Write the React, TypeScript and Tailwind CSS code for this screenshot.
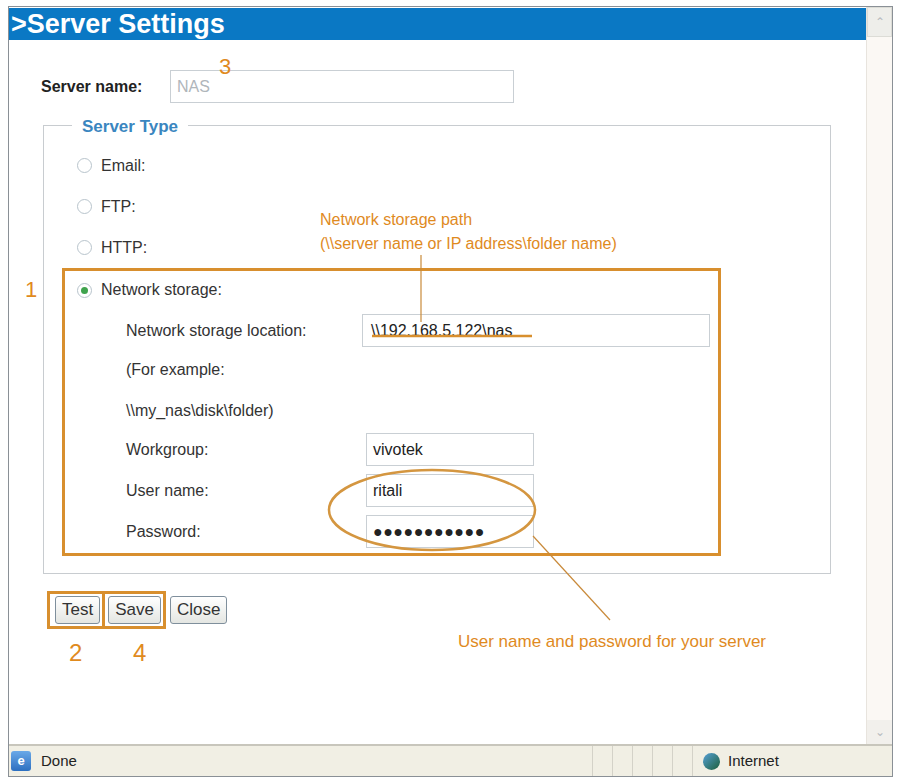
import React from "react";

const F = { fontFamily: '"Liberation Sans", Arial, sans-serif' };

function Radio({ checked }: { checked?: boolean }) {
  return (
    <span className="w-[15px] h-[15px] rounded-full border border-[#b8c4cc] bg-white flex items-center justify-center shrink-0">
      {checked && <span className="w-[7px] h-[7px] rounded-full bg-[#3fa34d]" />}
    </span>
  );
}

function Input({ w, children, className = "" }: { w: string; children?: React.ReactNode; className?: string }) {
  return (
    <div className={`${w} h-[33px] border border-[#c9cfd4] bg-white flex items-center px-[6px] text-[16px] text-[#222] ${className}`}>
      {children}
    </div>
  );
}

function Btn({ children }: { children: React.ReactNode }) {
  return (
    <div className="h-[28px] px-[6px] border border-[#7f8f9c] rounded-[3px] bg-gradient-to-b from-white to-[#e4e6e2] flex items-center text-[17px] text-[#333]">
      {children}
    </div>
  );
}

export default function App() {
  const orange = "text-[#e08a1e]";
  return (
    <div style={F} className="w-[901px] h-[781px] bg-white relative overflow-hidden">
      <div className="absolute left-[8px] top-[6px] right-[8px] bottom-[4px] border border-[#8a9096] flex flex-col">
        <div className="flex flex-1 min-h-0">
          <div className="flex-1 flex flex-col">
            <div className="h-[32px] mt-[1px] bg-[#0a78c4] text-white font-bold text-[27px] leading-[32px] pl-[2px]">&gt;Server Settings</div>
            <div className="flex items-center mt-[30px] pl-[32px]">
              <span className="font-bold text-[16px] text-[#222] w-[129px]">Server name:</span>
              <Input w="w-[344px]" className="text-[#b0b6bb] text-[14px]">NAS</Input>
            </div>
            <div className="relative mt-[22px] ml-[34px] w-[788px] h-[449px] border border-[#c8ccd0]">
              <span className="absolute -top-[12px] left-[28px] bg-white px-[10px] font-bold text-[17px] text-[#3a86c0]">Server Type</span>
              <div className="flex flex-col pt-[32px] pl-[33px] gap-[26px] text-[16px] text-[#333]">
                <div className="flex items-center gap-[9px] h-[15px]"><Radio /><span>Email:</span></div>
                <div className="flex items-center gap-[9px] h-[15px]"><Radio /><span>FTP:</span></div>
                <div className="flex items-center gap-[9px] h-[15px]"><Radio /><span>HTTP:</span></div>
              </div>
              <div className="absolute left-[18px] top-[142px] w-[659px] h-[288px] border-[3px] border-[#d88f2e]">
                <div className="flex items-center gap-[9px] mt-[7px] ml-[12px] text-[16px] text-[#333]"><Radio checked /><span>Network storage:</span></div>
                <div className="flex flex-col mt-[12px] ml-[61px] text-[16px] text-[#333]">
                  <div className="flex items-center h-[33px]"><span className="w-[236px]">Network storage location:</span><Input w="w-[348px]" className="!pl-[8px]">\\192.168.5.122\nas</Input></div>
                  <div className="h-[35px] flex items-end">(For example:</div>
                  <div className="h-[41px] flex items-end">\\my_nas\disk\folder)</div>
                  <div className="flex flex-col gap-[8px] mt-[10px]">
                    <div className="flex items-center"><span className="w-[240px]">Workgroup:</span><Input w="w-[168px]">vivotek</Input></div>
                    <div className="flex items-center"><span className="w-[240px]">User name:</span><Input w="w-[168px]">ritali</Input></div>
                    <div className="flex items-center"><span className="w-[240px]">Password:</span><Input w="w-[168px]" className="text-[13px] tracking-[0.5px]">●●●●●●●●●●●</Input></div>
                  </div>
                </div>
              </div>
            </div>
            <div className="flex items-center mt-[17px] ml-[38px]">
              <div className="border-[3px] border-[#d88f2e] p-[2px] pl-[5px]"><Btn>Test</Btn></div>
              <div className="border-[3px] border-l-0 border-[#d88f2e] p-[2px] pl-[3px]"><Btn>Save</Btn></div>
              <div className="ml-[4px]"><Btn>Close</Btn></div>
            </div>
          </div>
          <div className="w-[26px] bg-[#fbf8f4] border-l border-[#e8e4de] flex flex-col justify-between">
            <div className="h-[30px] bg-[#eeeeea] border border-[#dcdcd6] text-[#b8bcc0] text-[12px] flex items-center justify-center">⌃</div>
            <div className="h-[24px] bg-[#f2f0ec] text-[#b8bcc0] text-[12px] flex items-center justify-center">⌄</div>
          </div>
        </div>
        <div className="h-[32px] border-t-2 border-[#c8c6bc] bg-[#f1efe4] flex items-center text-[15px] text-[#222]">
          <span className="w-[20px] h-[20px] ml-[2px] rounded-[3px] bg-gradient-to-b from-[#6aa9e8] to-[#2c6fc0] text-white text-[13px] font-bold flex items-center justify-center">e</span>
          <span className="ml-[10px]">Done</span>
          <div className="ml-auto flex h-full">
            {[0, 1, 2, 3, 4].map((i) => <div key={i} className="w-[20px] border-l border-[#d4d2c8]" />)}
            <div className="w-[200px] border-l border-[#d4d2c8] flex items-center pl-[10px] gap-[8px]">
              <span className="w-[17px] h-[17px] rounded-full bg-gradient-to-br from-[#58a0d8] to-[#1d5e3a]" />
              <span>Internet</span>
            </div>
          </div>
        </div>
      </div>

      <span className={`absolute left-[219px] top-[50px] text-[22px] ${orange}`}>3</span>
      <span className={`absolute left-[25px] top-[273px] text-[22px] ${orange}`}>1</span>
      <span className={`absolute left-[69px] top-[635px] text-[24px] ${orange}`}>2</span>
      <span className={`absolute left-[133px] top-[635px] text-[24px] ${orange}`}>4</span>
      <div className={`absolute left-[320px] top-[208px] text-[16px] leading-[24px] ${orange}`}>
        Network storage path<br />(\\server name or IP address\folder name)
      </div>
      <div className={`absolute left-[458px] top-[629px] text-[17px] ${orange}`}>User name and password for your server</div>
      <svg className="absolute left-0 top-0 pointer-events-none" width="901" height="781">
        <line x1="421" y1="255" x2="421" y2="322" stroke="#c98a3a" strokeWidth="1.2" />
        <line x1="372" y1="336" x2="532" y2="336" stroke="#d88f2e" strokeWidth="2.5" />
        <ellipse cx="432" cy="510" rx="103" ry="40" fill="none" stroke="#d49640" strokeWidth="2.5" />
        <line x1="533" y1="536" x2="610" y2="620" stroke="#c98a3a" strokeWidth="1.2" />
      </svg>
    </div>
  );
}
